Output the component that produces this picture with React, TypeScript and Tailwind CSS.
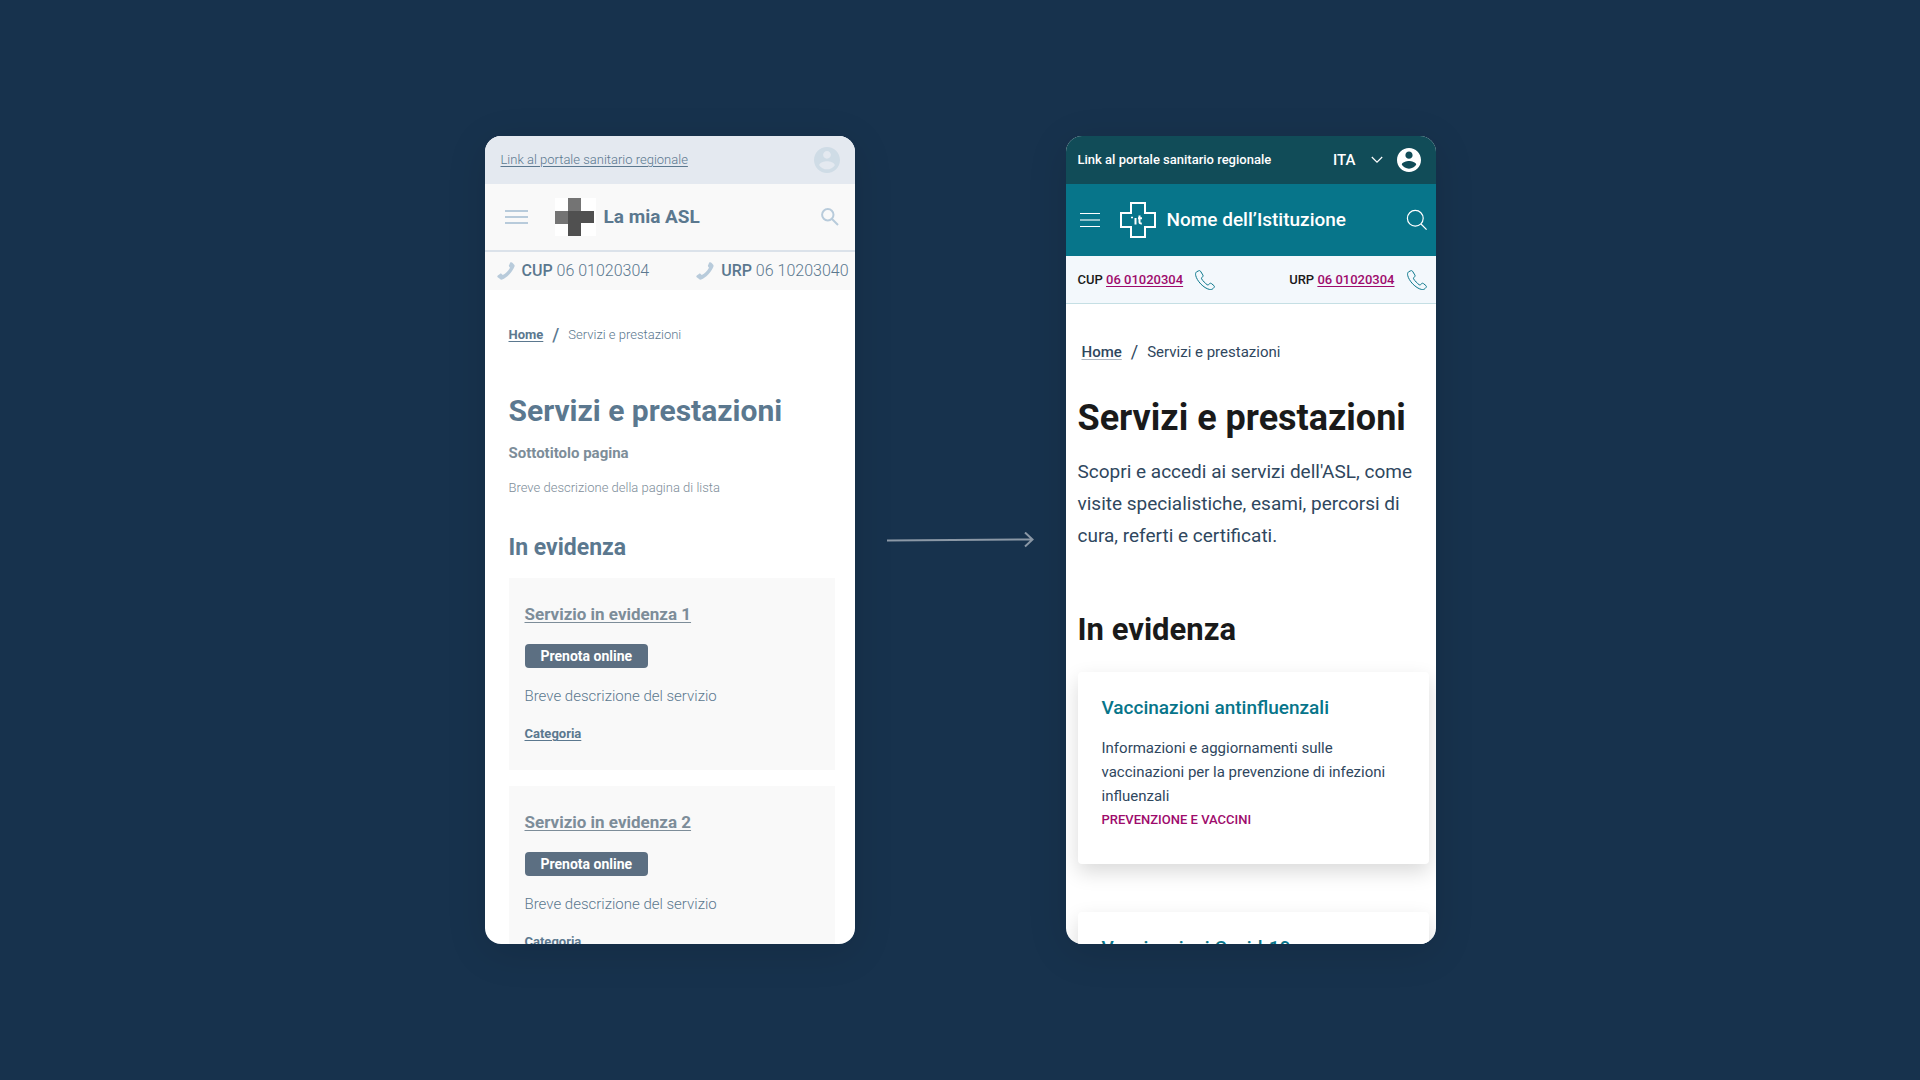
import type { ReactNode } from 'react';

function AccountIcon({ className }: { className: string }) {
  return (
    <svg viewBox="2 2 20 20" fill="currentColor" className={className} aria-hidden="true">
      <path d="M12 2C6.48 2 2 6.48 2 12s4.48 10 10 10 10-4.48 10-10S17.52 2 12 2zm0 3c1.66 0 3 1.34 3 3s-1.34 3-3 3-3-1.34-3-3 1.34-3 3-3zm0 14.2c-2.5 0-4.71-1.28-6-3.22.03-1.99 4-3.08 6-3.08 1.99 0 5.97 1.09 6 3.08-1.29 1.94-3.5 3.22-6 3.22z" />
    </svg>
  );
}

function HandsetIcon() {
  return (
    <svg viewBox="0 0 18 18" className="size-[18px] shrink-0 text-[#b8cbdb]" fill="currentColor" aria-hidden="true">
      <path d="M13.2.6c.8-.6 1.6-.5 2.2.1l1.8 2.1c.5.6.6 1.2.2 1.9-1.100 2.500-3 5.500-5.200 7.900-2.400 2.500-4.600 4-7 5-.7.300-1.300.100-1.800-.400L.7 15.300c-.6-.6-.5-1.300.1-1.800l2.100-1.600c.6-.4 1.200-.4 1.700.1l1.200 1.100c2.900-1.500 5.600-4.300 7.200-7.300l-.9-1.300c-.4-.6-.3-1.200.2-1.700z" />
    </svg>
  );
}

function PhoneOutlineIcon() {
  return (
    <svg viewBox="0 0 20 20" className="size-5 shrink-0 text-[#07758a]" fill="none" stroke="currentColor" strokeWidth="1" strokeLinejoin="round" aria-hidden="true">
      <path d="M1.600 1.800C.5 2.800.4 4 .7 5.400c.6 2.700 2.300 5.600 5 8.500 2.900 2.900 5.900 4.900 8.600 5.500 1.500.3 2.800.2 3.800-.9l.9-1c.6-.6.5-1.300-.1-1.900l-2.400-2c-.6-.5-1.300-.5-1.800 0l-1.200 1.100c-.4.4-1 .3-1.500-.1-1.700-1.200-4.200-3.800-5.300-5.600-.3-.5-.3-1 .1-1.400l.9-.9c.5-.6.5-1.200.1-1.800L5.500 1.200C5 .6 4.300.4 3.700.8z" />
    </svg>
  );
}

function HighlightCard({ title }: { title: string }) {
  return (
    <article className="flex flex-col items-start bg-[#f9f9f9] px-4 py-6 text-[#5b788f]">
      <h3 className="text-[17px] leading-6 font-bold text-[#7d8d99]">
        <a href="#" className="underline decoration-1 underline-offset-2">{title}</a>
      </h3>
      <button type="button" className="mt-[18px] h-6 rounded bg-[#5c6f82] px-4 text-[14px] leading-6 font-bold text-white">Prenota online</button>
      <p className="mt-4 text-[15px] leading-6 font-light">Breve descrizione del servizio</p>
      <a href="#" className="mt-[14px] text-[13px] leading-6 font-bold underline underline-offset-2">Categoria</a>
    </article>
  );
}

function Screen({ children }: { children: ReactNode }) {
  return (
    <section className="max-h-[808px] w-full max-w-[370px] overflow-hidden rounded-2xl bg-white shadow-[0_8px_40px_rgba(0,0,0,0.12)]">
      {children}
    </section>
  );
}

function BeforeScreen() {
  return (
    <Screen>
      <div className="flex h-12 items-center justify-between bg-[#e4e9f0] pr-[15px] pl-4">
        <a href="#" className="text-[13px] leading-6 font-light text-[#5b788f] underline underline-offset-2">Link al portale sanitario regionale</a>
        <button type="button" aria-label="Account">
          <AccountIcon className="size-[26px] text-[#cfdce6]" />
        </button>
      </div>
      <header className="flex h-[68px] items-center border-b-2 border-[#dbe2ea] bg-[#f9f9f9] pr-4 pl-5">
        <button type="button" aria-label="Menu" className="flex w-[23px] flex-col gap-1">
          <span className="h-[2px] bg-[#b8cbdb]" />
          <span className="h-[2px] bg-[#b8cbdb]" />
          <span className="h-[2px] bg-[#b8cbdb]" />
        </button>
        <svg viewBox="0 0 41 38" className="ml-[27px] h-[38px] w-[41px]" aria-hidden="true">
          <path fill="#fff" d="M0 0h41v38H0z" />
          <path fill="#747474" d="M13 0h13v13H13zM0 13h13v13H0z" />
          <path fill="#505050" d="M13 13h26v12H26v13H13z" />
        </svg>
        <span className="ml-2 flex-1 text-[19px] leading-6 font-bold text-[#5b788f]">La mia ASL</span>
        <button type="button" aria-label="Cerca">
          <svg viewBox="0 0 18 18" className="size-[18px] text-[#b8cbdb]" fill="none" stroke="currentColor" strokeWidth="2" aria-hidden="true">
            <circle cx="6.800" cy="6.800" r="5.700" />
            <path d="m11 11 6 6" />
          </svg>
        </button>
      </header>
      <div className="flex h-[38px] items-center justify-between bg-[#f9f9f9] pr-[6px] pl-3 text-[16px] leading-6 font-light text-[#5b788f]">
        <p className="flex items-center gap-[7px]"><HandsetIcon /><span><b className="font-medium">CUP</b> 06 01020304</span></p>
        <p className="flex items-center gap-[7px]"><HandsetIcon /><span><b className="font-medium">URP</b> 06 10203040</span></p>
      </div>
      <main className="pt-[33px] pr-5 pb-6 pl-6 text-[#5b788f]">
        <nav aria-label="Percorso" className="flex items-center gap-[9px] text-[13px] leading-6">
          <a href="#" className="font-bold underline underline-offset-2">Home</a>
          <span className="text-[18px] font-medium">/</span>
          <span className="font-light">Servizi e prestazioni</span>
        </nav>
        <h1 className="mt-11 text-[30px] leading-10 font-bold">Servizi e prestazioni</h1>
        <p className="mt-[10px] text-[15px] leading-6 font-bold text-[#7d8d99]">Sottotitolo pagina</p>
        <p className="mt-[11px] text-[13px] leading-6 font-light text-[#7d8d99]">Breve descrizione della pagina di lista</p>
        <h2 className="mt-8 text-[23px] leading-8 font-bold">In evidenza</h2>
        <div className="mt-[14px] flex flex-col gap-4">
          <HighlightCard title="Servizio in evidenza 1" />
          <HighlightCard title="Servizio in evidenza 2" />
        </div>
      </main>
    </Screen>
  );
}

function ServiceCard({ title, text, category }: { title: string; text?: string; category?: string }) {
  return (
    <article className="rounded bg-white px-6 pt-6 pb-8 shadow-[0_8px_20px_rgba(0,0,0,0.15)]">
      <h3 className="text-[19px] leading-6 font-medium text-[#07758a]"><a href="#">{title}</a></h3>
      {text && <p className="mt-4 text-[15px] leading-6 text-[#2f475e]">{text}</p>}
      {category && <a href="#" className="block text-[13px] leading-6 font-medium text-[#9e0b6c] uppercase">{category}</a>}
    </article>
  );
}

function ContactItem({ label }: { label: string }) {
  return (
    <p className="flex items-center gap-3">
      <span>{label} <a href="#" className="text-[#9e0b6c] underline underline-offset-2">06 01020304</a></span>
      <PhoneOutlineIcon />
    </p>
  );
}

function AfterScreen() {
  return (
    <Screen>
      <div className="flex h-12 items-center bg-[#114c58] pr-[15px] pl-3 text-white">
        <a href="#" className="flex-1 text-[13px] leading-6 font-medium">Link al portale sanitario regionale</a>
        <button type="button" className="flex items-center gap-[15px] text-[15px] leading-6 font-medium">
          ITA
          <svg viewBox="0 0 12 8" className="h-2 w-3" fill="none" stroke="currentColor" strokeWidth="1.200" aria-hidden="true">
            <path d="m.8 1 5.200 5.200L11.200 1" />
          </svg>
        </button>
        <button type="button" aria-label="Account" className="ml-[14px]">
          <AccountIcon className="size-6" />
        </button>
      </div>
      <header className="flex h-[72px] items-center bg-[#07758a] pr-2 pl-[14px] text-white">
        <button type="button" aria-label="Menu" className="flex w-5 flex-col gap-[5px]">
          <span className="h-px bg-white" />
          <span className="h-[2px] bg-white/55" />
          <span className="h-px bg-white" />
        </button>
        <svg viewBox="0 0 36 36" className="ml-5 size-9" fill="none" stroke="currentColor" aria-hidden="true">
          <path strokeWidth="2" d="M11 1h14v10h10v14H25v10H11V25H1V11h10z" />
          <path strokeWidth="2" d="M15.500 16v6.500M19.500 13.500v6.500q0 1.800 2.300 1.500M18 16.300h4" />
          <path strokeWidth="1.500" d="M11 15.500h2" />
        </svg>
        <span className="ml-[11px] flex-1 text-[19px] leading-6 font-medium">Nome dell’Istituzione</span>
        <button type="button" aria-label="Cerca">
          <svg viewBox="0 0 22 22" className="size-[22px]" fill="none" stroke="currentColor" strokeWidth="1.200" aria-hidden="true">
            <circle cx="9.300" cy="9.300" r="7.900" />
            <path d="m15 15 5.600 5.600" />
          </svg>
        </button>
      </header>
      <div className="flex h-12 items-center justify-between border-b border-[#c5dfe4] bg-[#f3f8fc] pr-[9px] pl-3 text-[13px] leading-6 font-medium text-[#1a1a1a]">
        <ContactItem label="CUP" />
        <ContactItem label="URP" />
      </div>
      <main className="pt-9 pr-[7px] pb-6 pl-3">
        <nav aria-label="Percorso" className="flex items-center gap-[9px] pl-1 text-[15px] leading-6 text-[#2f475e]">
          <a href="#" className="font-medium underline decoration-[#2f475e]/40 underline-offset-2">Home</a>
          <span className="text-[18px]">/</span>
          <span>Servizi e prestazioni</span>
        </nav>
        <h1 className="mt-[30px] text-[36px] leading-12 font-bold text-[#1a1a1a]">Servizi e prestazioni</h1>
        <p className="mt-[14px] text-[19px] leading-8 text-[#2f475e]">Scopri e accedi ai servizi dell'ASL, come visite specialistiche, esami, percorsi di cura, referti e certificati.</p>
        <h2 className="mt-[58px] text-[31px] leading-10 font-bold text-[#1a1a1a]">In evidenza</h2>
        <div className="mt-[22px] flex flex-col gap-12">
          <ServiceCard title="Vaccinazioni antinfluenzali" text="Informazioni e aggiornamenti sulle vaccinazioni per la prevenzione di infezioni influenzali" category="Prevenzione e vaccini" />
          <ServiceCard title="Vaccinazioni Covid-19" />
        </div>
      </main>
    </Screen>
  );
}

export default function App() {
  return (
    <div className="flex min-h-screen items-center justify-center gap-8 bg-[#17324d] font-[Roboto,sans-serif]">
      <BeforeScreen />
      <svg viewBox="0 0 147 16" className="h-4 w-[147px] shrink-0 text-[#8b98a6]" fill="none" stroke="currentColor" strokeWidth="2" aria-hidden="true">
        <path d="M0 8.500 145 7.500M138 .5l7.500 7-7.500 7" />
      </svg>
      <AfterScreen />
    </div>
  );
}
